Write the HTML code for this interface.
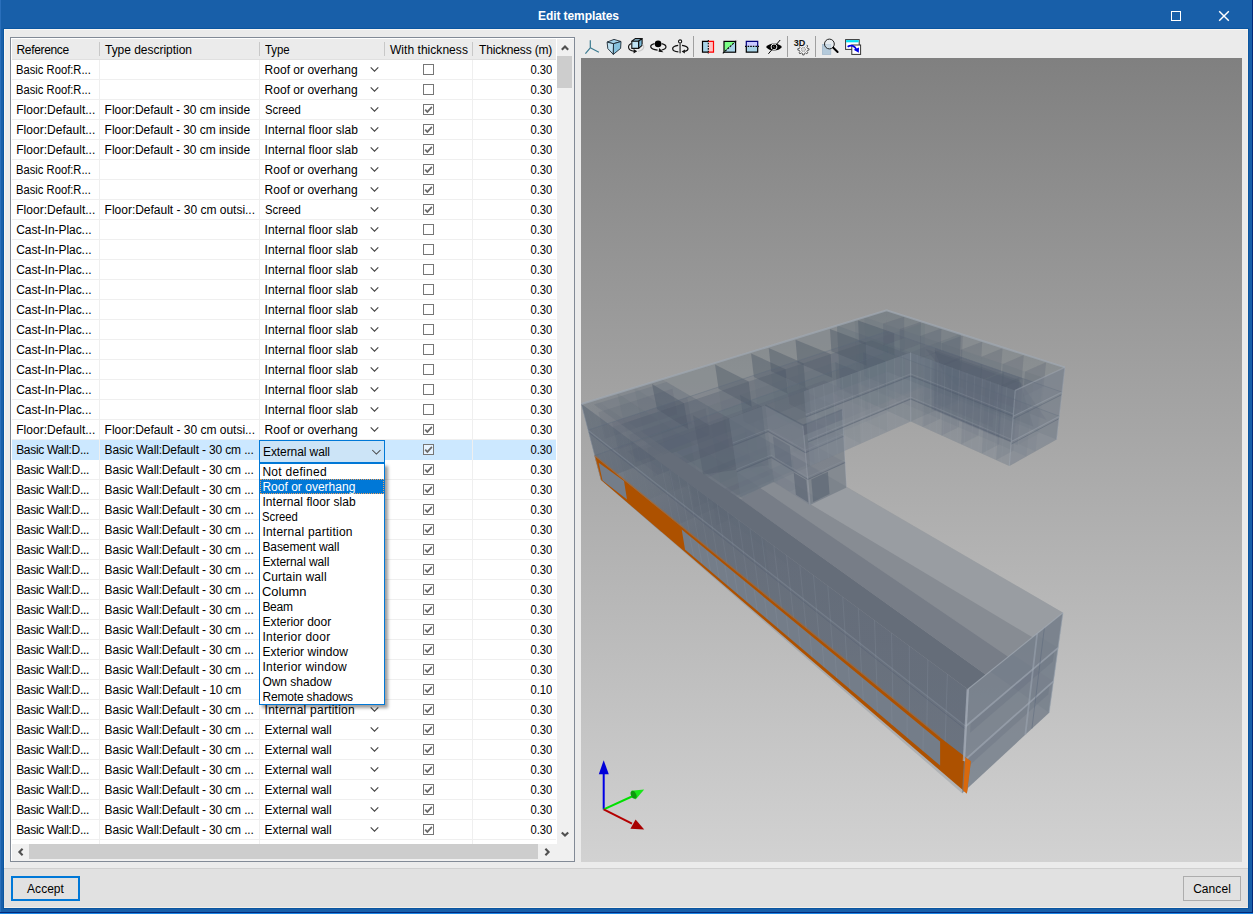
<!DOCTYPE html>
<html><head><meta charset="utf-8"><title>Edit templates</title>
<style>
*{box-sizing:border-box;margin:0;padding:0}
html,body{width:1253px;height:914px;overflow:hidden;background:#185fa9}
body{font-family:"Liberation Sans",sans-serif;font-size:12px;color:#000;position:relative}
span{white-space:pre}
.sx{display:inline-block;transform-origin:0 50%}
.c5 .sx{transform-origin:100% 50%}
#win{position:absolute;left:0;top:0;width:1253px;height:914px;background:#185fa9;overflow:hidden}
#win>div,#win>svg{position:absolute}
#bl{left:0;top:0;width:1px;height:914px;background:#2a6fbb}
#br{left:1252px;top:0;width:1px;height:914px;background:#03297a}
#bb{left:0;top:912px;width:1253px;height:1px;background:#03297a}
#bb2{left:0;top:913px;width:1253px;height:1px;background:#1b86e4}
#title{left:0;top:0;width:1253px;height:29px;color:#fff;font-weight:bold;font-size:12px}
#title .tt{position:absolute;left:538px;top:9px;line-height:15px}
#tbtn{left:1170px;top:0}
#client{left:3px;top:28px;width:1246px;height:881px;background:#ebebeb;border:1px solid #0a55a0;box-shadow:inset 1px 1px 0 #f8f5f1,inset -1px -1px 0 #f3efea}
#grid{left:10px;top:37px;width:565px;height:825px;background:#fff;border:1px solid #828a96}
#grid>div,#grid>svg{position:absolute}
#hdr{left:1px;top:1px;width:544px;height:21px;background:#ebebeb;border-bottom:1px solid #e0e0e0}
.h{position:absolute;top:1px;height:20px;line-height:20px;white-space:nowrap}
.h1{left:4.5px}.h2{left:93px}.h3{left:253px}.h4{left:378px}.h5{left:467px}
.h2:before,.h3:before,.h4:before,.h5:before{content:"";position:absolute;top:2px;height:14px;width:1px;background:#c8c8c8}
.h2:before{left:-6px}.h3:before{left:-6px}.h4:before{left:-6px}.h5:before{left:-7px}
#rows{left:1px;top:22px;width:544px;height:784px;overflow:hidden}
.row{position:absolute;left:0;width:544px;height:20px;border-bottom:1px solid #efefef}
.row.sel{background:#cce8ff;border-bottom-color:#cce8ff}
.c{position:absolute;top:1px;height:19px;line-height:19px;white-space:nowrap;overflow:hidden}
.c1{left:4.2px;width:84px}.c2{left:92.6px;width:155px}.c3{left:252.6px;width:120px}.c4{left:374px;width:87px}.c5{left:462px;width:78.4px;text-align:right}
.chev{position:absolute;left:104px;top:5px}
.cb{position:absolute;left:37px;top:3px;width:11px;height:11px;border:1px solid #767676;background:#fff}
.cb svg{position:absolute;left:-1px;top:-1px}
.sel .cb{background:#e6f3ff}
.vl{position:absolute;top:0;width:1px;height:784px;background:#efefef}
#vsb{left:546px;top:1px;width:17px;height:822px;background:#f0f0f0}
#vth{position:absolute;left:0;top:17px;width:15px;height:32px;background:#cdcdcd}
#hsb{left:1px;top:806px;width:545px;height:17px;background:#f0f0f0}
#hth{position:absolute;left:17px;top:0;width:509px;height:15px;background:#cdcdcd}
.combo{left:259px;top:440px;width:126px;height:23px;background:#cce4f7;border:1px solid #0078d7}
.combo .cbt{position:absolute;left:3px;top:4px;line-height:15px}
.cchev{position:absolute;left:111px;top:8px}
.dd{left:259px;top:463px;width:126px;height:242px;background:#fff;border:1px solid #0078d7;box-shadow:3px 3px 3px rgba(0,0,0,.38)}
.it{position:absolute;left:0;width:124px;height:15px;line-height:15px;white-space:nowrap}
.it .ddt{position:absolute;left:2.4px;top:1px;line-height:15px}
.it.hl{background:#0078d7;color:#fff;outline:1px dotted #e8a060;outline-offset:-1px}
#tb{left:581px;top:34px;width:300px;height:24px}
#view{left:581px;top:58px;width:661px;height:804px;background:linear-gradient(#808080,#d2d2d2);overflow:hidden}
#sepline{left:4px;top:868px;width:1244px;height:1px;background:#cfcfcf}
#bar{left:4px;top:869px;width:1244px;height:38px;background:#e1e1e1}
#bar2{left:4px;top:907px;width:1244px;height:1px;background:#f3efea}
#accept{left:11px;top:876px;width:69px;height:25px;border:2px solid #0078d7;background:#e1e1e1;text-align:center;line-height:23px}
#cancel{left:1183px;top:876px;width:58px;height:25px;border:1px solid #adadad;background:#e1e1e1;text-align:center;line-height:25px}

</style></head>
<body>
<div id="win">
<div id="title"><span class="tt" style="letter-spacing:-0.080px">Edit templates</span></div>
<svg id="tbtn" width="80" height="29" viewBox="0 0 80 29"><rect x="1.5" y="11.5" width="9" height="9" fill="none" stroke="#fff" stroke-width="1"/><path d="M49.2 11.2 L58.8 20.8 M58.8 11.2 L49.2 20.8" stroke="#fff" stroke-width="1.45" fill="none"/></svg>
<div id="client"></div>
<div id="grid">
<div id="hdr">
<div class="h h1"><span style="letter-spacing:-0.336px">Reference</span></div><div class="h h2"><span style="letter-spacing:-0.027px">Type description</span></div><div class="h h3"><span class="sx" style="transform:scaleX(0.9500)">Type</span></div><div class="h h4"><span style="letter-spacing:0.040px">With thickness</span></div><div class="h h5"><span style="letter-spacing:-0.170px">Thickness (m)</span></div>
</div>
<div id="rows">
<div class="row" style="top:0px"><div class="c c1"><span class="sx" style="transform:scaleX(0.9348)">Basic Roof:R...</span></div><div class="c c2"></div><div class="c c3"><span style="letter-spacing:0.017px">Roof or overhang</span><svg class="chev" width="11" height="7" viewBox="0 0 11 7"><path d="M1.7 1.3 L5.5 5.1 L9.3 1.3" fill="none" stroke="#444" stroke-width="1.1"/></svg></div><div class="c c4"><span class="cb"></span></div><div class="c c5"><span class="sx" style="transform:scaleX(0.9374)">0.30</span></div></div>
<div class="row" style="top:20px"><div class="c c1"><span class="sx" style="transform:scaleX(0.9348)">Basic Roof:R...</span></div><div class="c c2"></div><div class="c c3"><span style="letter-spacing:0.017px">Roof or overhang</span><svg class="chev" width="11" height="7" viewBox="0 0 11 7"><path d="M1.7 1.3 L5.5 5.1 L9.3 1.3" fill="none" stroke="#444" stroke-width="1.1"/></svg></div><div class="c c4"><span class="cb"></span></div><div class="c c5"><span class="sx" style="transform:scaleX(0.9374)">0.30</span></div></div>
<div class="row" style="top:40px"><div class="c c1"><span style="letter-spacing:0.029px">Floor:Default...</span></div><div class="c c2"><span style="letter-spacing:-0.046px">Floor:Default - 30 cm inside</span></div><div class="c c3"><span class="sx" style="transform:scaleX(0.9425)">Screed</span><svg class="chev" width="11" height="7" viewBox="0 0 11 7"><path d="M1.7 1.3 L5.5 5.1 L9.3 1.3" fill="none" stroke="#444" stroke-width="1.1"/></svg></div><div class="c c4"><span class="cb"><svg width="11" height="11" viewBox="0 0 11 11"><path d="M2.2 5.6 L4.4 7.9 L8.9 2.9" fill="none" stroke="#6a6a6a" stroke-width="1.7"/></svg></span></div><div class="c c5"><span class="sx" style="transform:scaleX(0.9374)">0.30</span></div></div>
<div class="row" style="top:60px"><div class="c c1"><span style="letter-spacing:0.029px">Floor:Default...</span></div><div class="c c2"><span style="letter-spacing:-0.046px">Floor:Default - 30 cm inside</span></div><div class="c c3"><span style="letter-spacing:0.074px">Internal floor slab</span><svg class="chev" width="11" height="7" viewBox="0 0 11 7"><path d="M1.7 1.3 L5.5 5.1 L9.3 1.3" fill="none" stroke="#444" stroke-width="1.1"/></svg></div><div class="c c4"><span class="cb"><svg width="11" height="11" viewBox="0 0 11 11"><path d="M2.2 5.6 L4.4 7.9 L8.9 2.9" fill="none" stroke="#6a6a6a" stroke-width="1.7"/></svg></span></div><div class="c c5"><span class="sx" style="transform:scaleX(0.9374)">0.30</span></div></div>
<div class="row" style="top:80px"><div class="c c1"><span style="letter-spacing:0.029px">Floor:Default...</span></div><div class="c c2"><span style="letter-spacing:-0.046px">Floor:Default - 30 cm inside</span></div><div class="c c3"><span style="letter-spacing:0.074px">Internal floor slab</span><svg class="chev" width="11" height="7" viewBox="0 0 11 7"><path d="M1.7 1.3 L5.5 5.1 L9.3 1.3" fill="none" stroke="#444" stroke-width="1.1"/></svg></div><div class="c c4"><span class="cb"><svg width="11" height="11" viewBox="0 0 11 11"><path d="M2.2 5.6 L4.4 7.9 L8.9 2.9" fill="none" stroke="#6a6a6a" stroke-width="1.7"/></svg></span></div><div class="c c5"><span class="sx" style="transform:scaleX(0.9374)">0.30</span></div></div>
<div class="row" style="top:100px"><div class="c c1"><span class="sx" style="transform:scaleX(0.9348)">Basic Roof:R...</span></div><div class="c c2"></div><div class="c c3"><span style="letter-spacing:0.017px">Roof or overhang</span><svg class="chev" width="11" height="7" viewBox="0 0 11 7"><path d="M1.7 1.3 L5.5 5.1 L9.3 1.3" fill="none" stroke="#444" stroke-width="1.1"/></svg></div><div class="c c4"><span class="cb"><svg width="11" height="11" viewBox="0 0 11 11"><path d="M2.2 5.6 L4.4 7.9 L8.9 2.9" fill="none" stroke="#6a6a6a" stroke-width="1.7"/></svg></span></div><div class="c c5"><span class="sx" style="transform:scaleX(0.9374)">0.30</span></div></div>
<div class="row" style="top:120px"><div class="c c1"><span class="sx" style="transform:scaleX(0.9348)">Basic Roof:R...</span></div><div class="c c2"></div><div class="c c3"><span style="letter-spacing:0.017px">Roof or overhang</span><svg class="chev" width="11" height="7" viewBox="0 0 11 7"><path d="M1.7 1.3 L5.5 5.1 L9.3 1.3" fill="none" stroke="#444" stroke-width="1.1"/></svg></div><div class="c c4"><span class="cb"><svg width="11" height="11" viewBox="0 0 11 11"><path d="M2.2 5.6 L4.4 7.9 L8.9 2.9" fill="none" stroke="#6a6a6a" stroke-width="1.7"/></svg></span></div><div class="c c5"><span class="sx" style="transform:scaleX(0.9374)">0.30</span></div></div>
<div class="row" style="top:140px"><div class="c c1"><span style="letter-spacing:0.029px">Floor:Default...</span></div><div class="c c2"><span style="letter-spacing:-0.010px">Floor:Default - 30 cm outsi...</span></div><div class="c c3"><span class="sx" style="transform:scaleX(0.9425)">Screed</span><svg class="chev" width="11" height="7" viewBox="0 0 11 7"><path d="M1.7 1.3 L5.5 5.1 L9.3 1.3" fill="none" stroke="#444" stroke-width="1.1"/></svg></div><div class="c c4"><span class="cb"><svg width="11" height="11" viewBox="0 0 11 11"><path d="M2.2 5.6 L4.4 7.9 L8.9 2.9" fill="none" stroke="#6a6a6a" stroke-width="1.7"/></svg></span></div><div class="c c5"><span class="sx" style="transform:scaleX(0.9374)">0.30</span></div></div>
<div class="row" style="top:160px"><div class="c c1"><span style="letter-spacing:-0.049px">Cast-In-Plac...</span></div><div class="c c2"></div><div class="c c3"><span style="letter-spacing:0.074px">Internal floor slab</span><svg class="chev" width="11" height="7" viewBox="0 0 11 7"><path d="M1.7 1.3 L5.5 5.1 L9.3 1.3" fill="none" stroke="#444" stroke-width="1.1"/></svg></div><div class="c c4"><span class="cb"></span></div><div class="c c5"><span class="sx" style="transform:scaleX(0.9374)">0.30</span></div></div>
<div class="row" style="top:180px"><div class="c c1"><span style="letter-spacing:-0.049px">Cast-In-Plac...</span></div><div class="c c2"></div><div class="c c3"><span style="letter-spacing:0.074px">Internal floor slab</span><svg class="chev" width="11" height="7" viewBox="0 0 11 7"><path d="M1.7 1.3 L5.5 5.1 L9.3 1.3" fill="none" stroke="#444" stroke-width="1.1"/></svg></div><div class="c c4"><span class="cb"></span></div><div class="c c5"><span class="sx" style="transform:scaleX(0.9374)">0.30</span></div></div>
<div class="row" style="top:200px"><div class="c c1"><span style="letter-spacing:-0.049px">Cast-In-Plac...</span></div><div class="c c2"></div><div class="c c3"><span style="letter-spacing:0.074px">Internal floor slab</span><svg class="chev" width="11" height="7" viewBox="0 0 11 7"><path d="M1.7 1.3 L5.5 5.1 L9.3 1.3" fill="none" stroke="#444" stroke-width="1.1"/></svg></div><div class="c c4"><span class="cb"></span></div><div class="c c5"><span class="sx" style="transform:scaleX(0.9374)">0.30</span></div></div>
<div class="row" style="top:220px"><div class="c c1"><span style="letter-spacing:-0.049px">Cast-In-Plac...</span></div><div class="c c2"></div><div class="c c3"><span style="letter-spacing:0.074px">Internal floor slab</span><svg class="chev" width="11" height="7" viewBox="0 0 11 7"><path d="M1.7 1.3 L5.5 5.1 L9.3 1.3" fill="none" stroke="#444" stroke-width="1.1"/></svg></div><div class="c c4"><span class="cb"></span></div><div class="c c5"><span class="sx" style="transform:scaleX(0.9374)">0.30</span></div></div>
<div class="row" style="top:240px"><div class="c c1"><span style="letter-spacing:-0.049px">Cast-In-Plac...</span></div><div class="c c2"></div><div class="c c3"><span style="letter-spacing:0.074px">Internal floor slab</span><svg class="chev" width="11" height="7" viewBox="0 0 11 7"><path d="M1.7 1.3 L5.5 5.1 L9.3 1.3" fill="none" stroke="#444" stroke-width="1.1"/></svg></div><div class="c c4"><span class="cb"></span></div><div class="c c5"><span class="sx" style="transform:scaleX(0.9374)">0.30</span></div></div>
<div class="row" style="top:260px"><div class="c c1"><span style="letter-spacing:-0.049px">Cast-In-Plac...</span></div><div class="c c2"></div><div class="c c3"><span style="letter-spacing:0.074px">Internal floor slab</span><svg class="chev" width="11" height="7" viewBox="0 0 11 7"><path d="M1.7 1.3 L5.5 5.1 L9.3 1.3" fill="none" stroke="#444" stroke-width="1.1"/></svg></div><div class="c c4"><span class="cb"></span></div><div class="c c5"><span class="sx" style="transform:scaleX(0.9374)">0.30</span></div></div>
<div class="row" style="top:280px"><div class="c c1"><span style="letter-spacing:-0.049px">Cast-In-Plac...</span></div><div class="c c2"></div><div class="c c3"><span style="letter-spacing:0.074px">Internal floor slab</span><svg class="chev" width="11" height="7" viewBox="0 0 11 7"><path d="M1.7 1.3 L5.5 5.1 L9.3 1.3" fill="none" stroke="#444" stroke-width="1.1"/></svg></div><div class="c c4"><span class="cb"></span></div><div class="c c5"><span class="sx" style="transform:scaleX(0.9374)">0.30</span></div></div>
<div class="row" style="top:300px"><div class="c c1"><span style="letter-spacing:-0.049px">Cast-In-Plac...</span></div><div class="c c2"></div><div class="c c3"><span style="letter-spacing:0.074px">Internal floor slab</span><svg class="chev" width="11" height="7" viewBox="0 0 11 7"><path d="M1.7 1.3 L5.5 5.1 L9.3 1.3" fill="none" stroke="#444" stroke-width="1.1"/></svg></div><div class="c c4"><span class="cb"></span></div><div class="c c5"><span class="sx" style="transform:scaleX(0.9374)">0.30</span></div></div>
<div class="row" style="top:320px"><div class="c c1"><span style="letter-spacing:-0.049px">Cast-In-Plac...</span></div><div class="c c2"></div><div class="c c3"><span style="letter-spacing:0.074px">Internal floor slab</span><svg class="chev" width="11" height="7" viewBox="0 0 11 7"><path d="M1.7 1.3 L5.5 5.1 L9.3 1.3" fill="none" stroke="#444" stroke-width="1.1"/></svg></div><div class="c c4"><span class="cb"></span></div><div class="c c5"><span class="sx" style="transform:scaleX(0.9374)">0.30</span></div></div>
<div class="row" style="top:340px"><div class="c c1"><span style="letter-spacing:-0.049px">Cast-In-Plac...</span></div><div class="c c2"></div><div class="c c3"><span style="letter-spacing:0.074px">Internal floor slab</span><svg class="chev" width="11" height="7" viewBox="0 0 11 7"><path d="M1.7 1.3 L5.5 5.1 L9.3 1.3" fill="none" stroke="#444" stroke-width="1.1"/></svg></div><div class="c c4"><span class="cb"></span></div><div class="c c5"><span class="sx" style="transform:scaleX(0.9374)">0.30</span></div></div>
<div class="row" style="top:360px"><div class="c c1"><span style="letter-spacing:0.029px">Floor:Default...</span></div><div class="c c2"><span style="letter-spacing:-0.010px">Floor:Default - 30 cm outsi...</span></div><div class="c c3"><span style="letter-spacing:0.017px">Roof or overhang</span><svg class="chev" width="11" height="7" viewBox="0 0 11 7"><path d="M1.7 1.3 L5.5 5.1 L9.3 1.3" fill="none" stroke="#444" stroke-width="1.1"/></svg></div><div class="c c4"><span class="cb"><svg width="11" height="11" viewBox="0 0 11 11"><path d="M2.2 5.6 L4.4 7.9 L8.9 2.9" fill="none" stroke="#6a6a6a" stroke-width="1.7"/></svg></span></div><div class="c c5"><span class="sx" style="transform:scaleX(0.9374)">0.30</span></div></div>
<div class="row sel" style="top:380px"><div class="c c1"><span style="letter-spacing:-0.317px">Basic Wall:D...</span></div><div class="c c2"><span style="letter-spacing:-0.150px">Basic Wall:Default - 30 cm ...</span></div><div class="c c3"><span style="letter-spacing:-0.088px">External wall</span><svg class="chev" width="11" height="7" viewBox="0 0 11 7"><path d="M1.7 1.3 L5.5 5.1 L9.3 1.3" fill="none" stroke="#444" stroke-width="1.1"/></svg></div><div class="c c4"><span class="cb"><svg width="11" height="11" viewBox="0 0 11 11"><path d="M2.2 5.6 L4.4 7.9 L8.9 2.9" fill="none" stroke="#6a6a6a" stroke-width="1.7"/></svg></span></div><div class="c c5"><span class="sx" style="transform:scaleX(0.9374)">0.30</span></div></div>
<div class="row" style="top:400px"><div class="c c1"><span style="letter-spacing:-0.317px">Basic Wall:D...</span></div><div class="c c2"><span style="letter-spacing:-0.150px">Basic Wall:Default - 30 cm ...</span></div><div class="c c3"><span style="letter-spacing:-0.088px">External wall</span><svg class="chev" width="11" height="7" viewBox="0 0 11 7"><path d="M1.7 1.3 L5.5 5.1 L9.3 1.3" fill="none" stroke="#444" stroke-width="1.1"/></svg></div><div class="c c4"><span class="cb"><svg width="11" height="11" viewBox="0 0 11 11"><path d="M2.2 5.6 L4.4 7.9 L8.9 2.9" fill="none" stroke="#6a6a6a" stroke-width="1.7"/></svg></span></div><div class="c c5"><span class="sx" style="transform:scaleX(0.9374)">0.30</span></div></div>
<div class="row" style="top:420px"><div class="c c1"><span style="letter-spacing:-0.317px">Basic Wall:D...</span></div><div class="c c2"><span style="letter-spacing:-0.150px">Basic Wall:Default - 30 cm ...</span></div><div class="c c3"><span style="letter-spacing:-0.088px">External wall</span><svg class="chev" width="11" height="7" viewBox="0 0 11 7"><path d="M1.7 1.3 L5.5 5.1 L9.3 1.3" fill="none" stroke="#444" stroke-width="1.1"/></svg></div><div class="c c4"><span class="cb"><svg width="11" height="11" viewBox="0 0 11 11"><path d="M2.2 5.6 L4.4 7.9 L8.9 2.9" fill="none" stroke="#6a6a6a" stroke-width="1.7"/></svg></span></div><div class="c c5"><span class="sx" style="transform:scaleX(0.9374)">0.30</span></div></div>
<div class="row" style="top:440px"><div class="c c1"><span style="letter-spacing:-0.317px">Basic Wall:D...</span></div><div class="c c2"><span style="letter-spacing:-0.150px">Basic Wall:Default - 30 cm ...</span></div><div class="c c3"><span style="letter-spacing:-0.088px">External wall</span><svg class="chev" width="11" height="7" viewBox="0 0 11 7"><path d="M1.7 1.3 L5.5 5.1 L9.3 1.3" fill="none" stroke="#444" stroke-width="1.1"/></svg></div><div class="c c4"><span class="cb"><svg width="11" height="11" viewBox="0 0 11 11"><path d="M2.2 5.6 L4.4 7.9 L8.9 2.9" fill="none" stroke="#6a6a6a" stroke-width="1.7"/></svg></span></div><div class="c c5"><span class="sx" style="transform:scaleX(0.9374)">0.30</span></div></div>
<div class="row" style="top:460px"><div class="c c1"><span style="letter-spacing:-0.317px">Basic Wall:D...</span></div><div class="c c2"><span style="letter-spacing:-0.150px">Basic Wall:Default - 30 cm ...</span></div><div class="c c3"><span style="letter-spacing:-0.088px">External wall</span><svg class="chev" width="11" height="7" viewBox="0 0 11 7"><path d="M1.7 1.3 L5.5 5.1 L9.3 1.3" fill="none" stroke="#444" stroke-width="1.1"/></svg></div><div class="c c4"><span class="cb"><svg width="11" height="11" viewBox="0 0 11 11"><path d="M2.2 5.6 L4.4 7.9 L8.9 2.9" fill="none" stroke="#6a6a6a" stroke-width="1.7"/></svg></span></div><div class="c c5"><span class="sx" style="transform:scaleX(0.9374)">0.30</span></div></div>
<div class="row" style="top:480px"><div class="c c1"><span style="letter-spacing:-0.317px">Basic Wall:D...</span></div><div class="c c2"><span style="letter-spacing:-0.150px">Basic Wall:Default - 30 cm ...</span></div><div class="c c3"><span style="letter-spacing:-0.088px">External wall</span><svg class="chev" width="11" height="7" viewBox="0 0 11 7"><path d="M1.7 1.3 L5.5 5.1 L9.3 1.3" fill="none" stroke="#444" stroke-width="1.1"/></svg></div><div class="c c4"><span class="cb"><svg width="11" height="11" viewBox="0 0 11 11"><path d="M2.2 5.6 L4.4 7.9 L8.9 2.9" fill="none" stroke="#6a6a6a" stroke-width="1.7"/></svg></span></div><div class="c c5"><span class="sx" style="transform:scaleX(0.9374)">0.30</span></div></div>
<div class="row" style="top:500px"><div class="c c1"><span style="letter-spacing:-0.317px">Basic Wall:D...</span></div><div class="c c2"><span style="letter-spacing:-0.150px">Basic Wall:Default - 30 cm ...</span></div><div class="c c3"><span style="letter-spacing:-0.088px">External wall</span><svg class="chev" width="11" height="7" viewBox="0 0 11 7"><path d="M1.7 1.3 L5.5 5.1 L9.3 1.3" fill="none" stroke="#444" stroke-width="1.1"/></svg></div><div class="c c4"><span class="cb"><svg width="11" height="11" viewBox="0 0 11 11"><path d="M2.2 5.6 L4.4 7.9 L8.9 2.9" fill="none" stroke="#6a6a6a" stroke-width="1.7"/></svg></span></div><div class="c c5"><span class="sx" style="transform:scaleX(0.9374)">0.30</span></div></div>
<div class="row" style="top:520px"><div class="c c1"><span style="letter-spacing:-0.317px">Basic Wall:D...</span></div><div class="c c2"><span style="letter-spacing:-0.150px">Basic Wall:Default - 30 cm ...</span></div><div class="c c3"><span style="letter-spacing:-0.088px">External wall</span><svg class="chev" width="11" height="7" viewBox="0 0 11 7"><path d="M1.7 1.3 L5.5 5.1 L9.3 1.3" fill="none" stroke="#444" stroke-width="1.1"/></svg></div><div class="c c4"><span class="cb"><svg width="11" height="11" viewBox="0 0 11 11"><path d="M2.2 5.6 L4.4 7.9 L8.9 2.9" fill="none" stroke="#6a6a6a" stroke-width="1.7"/></svg></span></div><div class="c c5"><span class="sx" style="transform:scaleX(0.9374)">0.30</span></div></div>
<div class="row" style="top:540px"><div class="c c1"><span style="letter-spacing:-0.317px">Basic Wall:D...</span></div><div class="c c2"><span style="letter-spacing:-0.150px">Basic Wall:Default - 30 cm ...</span></div><div class="c c3"><span style="letter-spacing:-0.088px">External wall</span><svg class="chev" width="11" height="7" viewBox="0 0 11 7"><path d="M1.7 1.3 L5.5 5.1 L9.3 1.3" fill="none" stroke="#444" stroke-width="1.1"/></svg></div><div class="c c4"><span class="cb"><svg width="11" height="11" viewBox="0 0 11 11"><path d="M2.2 5.6 L4.4 7.9 L8.9 2.9" fill="none" stroke="#6a6a6a" stroke-width="1.7"/></svg></span></div><div class="c c5"><span class="sx" style="transform:scaleX(0.9374)">0.30</span></div></div>
<div class="row" style="top:560px"><div class="c c1"><span style="letter-spacing:-0.317px">Basic Wall:D...</span></div><div class="c c2"><span style="letter-spacing:-0.150px">Basic Wall:Default - 30 cm ...</span></div><div class="c c3"><span style="letter-spacing:-0.088px">External wall</span><svg class="chev" width="11" height="7" viewBox="0 0 11 7"><path d="M1.7 1.3 L5.5 5.1 L9.3 1.3" fill="none" stroke="#444" stroke-width="1.1"/></svg></div><div class="c c4"><span class="cb"><svg width="11" height="11" viewBox="0 0 11 11"><path d="M2.2 5.6 L4.4 7.9 L8.9 2.9" fill="none" stroke="#6a6a6a" stroke-width="1.7"/></svg></span></div><div class="c c5"><span class="sx" style="transform:scaleX(0.9374)">0.30</span></div></div>
<div class="row" style="top:580px"><div class="c c1"><span style="letter-spacing:-0.317px">Basic Wall:D...</span></div><div class="c c2"><span style="letter-spacing:-0.150px">Basic Wall:Default - 30 cm ...</span></div><div class="c c3"><span style="letter-spacing:-0.088px">External wall</span><svg class="chev" width="11" height="7" viewBox="0 0 11 7"><path d="M1.7 1.3 L5.5 5.1 L9.3 1.3" fill="none" stroke="#444" stroke-width="1.1"/></svg></div><div class="c c4"><span class="cb"><svg width="11" height="11" viewBox="0 0 11 11"><path d="M2.2 5.6 L4.4 7.9 L8.9 2.9" fill="none" stroke="#6a6a6a" stroke-width="1.7"/></svg></span></div><div class="c c5"><span class="sx" style="transform:scaleX(0.9374)">0.30</span></div></div>
<div class="row" style="top:600px"><div class="c c1"><span style="letter-spacing:-0.317px">Basic Wall:D...</span></div><div class="c c2"><span style="letter-spacing:-0.150px">Basic Wall:Default - 30 cm ...</span></div><div class="c c3"><span style="letter-spacing:-0.088px">External wall</span><svg class="chev" width="11" height="7" viewBox="0 0 11 7"><path d="M1.7 1.3 L5.5 5.1 L9.3 1.3" fill="none" stroke="#444" stroke-width="1.1"/></svg></div><div class="c c4"><span class="cb"><svg width="11" height="11" viewBox="0 0 11 11"><path d="M2.2 5.6 L4.4 7.9 L8.9 2.9" fill="none" stroke="#6a6a6a" stroke-width="1.7"/></svg></span></div><div class="c c5"><span class="sx" style="transform:scaleX(0.9374)">0.30</span></div></div>
<div class="row" style="top:620px"><div class="c c1"><span style="letter-spacing:-0.317px">Basic Wall:D...</span></div><div class="c c2"><span style="letter-spacing:-0.143px">Basic Wall:Default - 10 cm</span></div><div class="c c3"><span style="letter-spacing:0.237px">Internal partition</span><svg class="chev" width="11" height="7" viewBox="0 0 11 7"><path d="M1.7 1.3 L5.5 5.1 L9.3 1.3" fill="none" stroke="#444" stroke-width="1.1"/></svg></div><div class="c c4"><span class="cb"><svg width="11" height="11" viewBox="0 0 11 11"><path d="M2.2 5.6 L4.4 7.9 L8.9 2.9" fill="none" stroke="#6a6a6a" stroke-width="1.7"/></svg></span></div><div class="c c5"><span class="sx" style="transform:scaleX(0.9374)">0.10</span></div></div>
<div class="row" style="top:640px"><div class="c c1"><span style="letter-spacing:-0.317px">Basic Wall:D...</span></div><div class="c c2"><span style="letter-spacing:-0.150px">Basic Wall:Default - 30 cm ...</span></div><div class="c c3"><span style="letter-spacing:0.237px">Internal partition</span><svg class="chev" width="11" height="7" viewBox="0 0 11 7"><path d="M1.7 1.3 L5.5 5.1 L9.3 1.3" fill="none" stroke="#444" stroke-width="1.1"/></svg></div><div class="c c4"><span class="cb"><svg width="11" height="11" viewBox="0 0 11 11"><path d="M2.2 5.6 L4.4 7.9 L8.9 2.9" fill="none" stroke="#6a6a6a" stroke-width="1.7"/></svg></span></div><div class="c c5"><span class="sx" style="transform:scaleX(0.9374)">0.30</span></div></div>
<div class="row" style="top:660px"><div class="c c1"><span style="letter-spacing:-0.317px">Basic Wall:D...</span></div><div class="c c2"><span style="letter-spacing:-0.150px">Basic Wall:Default - 30 cm ...</span></div><div class="c c3"><span style="letter-spacing:-0.088px">External wall</span><svg class="chev" width="11" height="7" viewBox="0 0 11 7"><path d="M1.7 1.3 L5.5 5.1 L9.3 1.3" fill="none" stroke="#444" stroke-width="1.1"/></svg></div><div class="c c4"><span class="cb"><svg width="11" height="11" viewBox="0 0 11 11"><path d="M2.2 5.6 L4.4 7.9 L8.9 2.9" fill="none" stroke="#6a6a6a" stroke-width="1.7"/></svg></span></div><div class="c c5"><span class="sx" style="transform:scaleX(0.9374)">0.30</span></div></div>
<div class="row" style="top:680px"><div class="c c1"><span style="letter-spacing:-0.317px">Basic Wall:D...</span></div><div class="c c2"><span style="letter-spacing:-0.150px">Basic Wall:Default - 30 cm ...</span></div><div class="c c3"><span style="letter-spacing:-0.088px">External wall</span><svg class="chev" width="11" height="7" viewBox="0 0 11 7"><path d="M1.7 1.3 L5.5 5.1 L9.3 1.3" fill="none" stroke="#444" stroke-width="1.1"/></svg></div><div class="c c4"><span class="cb"><svg width="11" height="11" viewBox="0 0 11 11"><path d="M2.2 5.6 L4.4 7.9 L8.9 2.9" fill="none" stroke="#6a6a6a" stroke-width="1.7"/></svg></span></div><div class="c c5"><span class="sx" style="transform:scaleX(0.9374)">0.30</span></div></div>
<div class="row" style="top:700px"><div class="c c1"><span style="letter-spacing:-0.317px">Basic Wall:D...</span></div><div class="c c2"><span style="letter-spacing:-0.150px">Basic Wall:Default - 30 cm ...</span></div><div class="c c3"><span style="letter-spacing:-0.088px">External wall</span><svg class="chev" width="11" height="7" viewBox="0 0 11 7"><path d="M1.7 1.3 L5.5 5.1 L9.3 1.3" fill="none" stroke="#444" stroke-width="1.1"/></svg></div><div class="c c4"><span class="cb"><svg width="11" height="11" viewBox="0 0 11 11"><path d="M2.2 5.6 L4.4 7.9 L8.9 2.9" fill="none" stroke="#6a6a6a" stroke-width="1.7"/></svg></span></div><div class="c c5"><span class="sx" style="transform:scaleX(0.9374)">0.30</span></div></div>
<div class="row" style="top:720px"><div class="c c1"><span style="letter-spacing:-0.317px">Basic Wall:D...</span></div><div class="c c2"><span style="letter-spacing:-0.150px">Basic Wall:Default - 30 cm ...</span></div><div class="c c3"><span style="letter-spacing:-0.088px">External wall</span><svg class="chev" width="11" height="7" viewBox="0 0 11 7"><path d="M1.7 1.3 L5.5 5.1 L9.3 1.3" fill="none" stroke="#444" stroke-width="1.1"/></svg></div><div class="c c4"><span class="cb"><svg width="11" height="11" viewBox="0 0 11 11"><path d="M2.2 5.6 L4.4 7.9 L8.9 2.9" fill="none" stroke="#6a6a6a" stroke-width="1.7"/></svg></span></div><div class="c c5"><span class="sx" style="transform:scaleX(0.9374)">0.30</span></div></div>
<div class="row" style="top:740px"><div class="c c1"><span style="letter-spacing:-0.317px">Basic Wall:D...</span></div><div class="c c2"><span style="letter-spacing:-0.150px">Basic Wall:Default - 30 cm ...</span></div><div class="c c3"><span style="letter-spacing:-0.088px">External wall</span><svg class="chev" width="11" height="7" viewBox="0 0 11 7"><path d="M1.7 1.3 L5.5 5.1 L9.3 1.3" fill="none" stroke="#444" stroke-width="1.1"/></svg></div><div class="c c4"><span class="cb"><svg width="11" height="11" viewBox="0 0 11 11"><path d="M2.2 5.6 L4.4 7.9 L8.9 2.9" fill="none" stroke="#6a6a6a" stroke-width="1.7"/></svg></span></div><div class="c c5"><span class="sx" style="transform:scaleX(0.9374)">0.30</span></div></div>
<div class="row" style="top:760px"><div class="c c1"><span style="letter-spacing:-0.317px">Basic Wall:D...</span></div><div class="c c2"><span style="letter-spacing:-0.150px">Basic Wall:Default - 30 cm ...</span></div><div class="c c3"><span style="letter-spacing:-0.088px">External wall</span><svg class="chev" width="11" height="7" viewBox="0 0 11 7"><path d="M1.7 1.3 L5.5 5.1 L9.3 1.3" fill="none" stroke="#444" stroke-width="1.1"/></svg></div><div class="c c4"><span class="cb"><svg width="11" height="11" viewBox="0 0 11 11"><path d="M2.2 5.6 L4.4 7.9 L8.9 2.9" fill="none" stroke="#6a6a6a" stroke-width="1.7"/></svg></span></div><div class="c c5"><span class="sx" style="transform:scaleX(0.9374)">0.30</span></div></div>
<div class="row" style="top:780px"><div class="c c1"><span style="letter-spacing:-0.317px">Basic Wall:D...</span></div><div class="c c2"><span style="letter-spacing:-0.150px">Basic Wall:Default - 30 cm ...</span></div><div class="c c3"><span style="letter-spacing:-0.088px">External wall</span><svg class="chev" width="11" height="7" viewBox="0 0 11 7"><path d="M1.7 1.3 L5.5 5.1 L9.3 1.3" fill="none" stroke="#444" stroke-width="1.1"/></svg></div><div class="c c4"><span class="cb"><svg width="11" height="11" viewBox="0 0 11 11"><path d="M2.2 5.6 L4.4 7.9 L8.9 2.9" fill="none" stroke="#6a6a6a" stroke-width="1.7"/></svg></span></div><div class="c c5"><span class="sx" style="transform:scaleX(0.9374)">0.30</span></div></div>
<div class="vl" style="left:87px"></div><div class="vl" style="left:247px"></div><div class="vl" style="left:460px"></div>
</div>
<div id="vsb"><svg width="16" height="16" style="position:absolute;left:0;top:1px" viewBox="0 0 16 16"><path d="M4.8 9.8 L8 6.6 L11.2 9.8" fill="none" stroke="#505050" stroke-width="2.1"/></svg><div id="vth"></div><svg width="16" height="16" style="position:absolute;left:0;top:787px" viewBox="0 0 16 16"><path d="M4.8 6.4 L8 9.6 L11.2 6.4" fill="none" stroke="#505050" stroke-width="2.1"/></svg></div>
<div id="hsb"><svg width="16" height="16" style="position:absolute;left:1px;top:0" viewBox="0 0 16 16"><path d="M9.6 4.7 L6.4 8 L9.6 11.3" fill="none" stroke="#505050" stroke-width="2.1"/></svg><div id="hth"></div><svg width="16" height="16" style="position:absolute;left:527px;top:0" viewBox="0 0 16 16"><path d="M6.4 4.7 L9.6 8 L6.4 11.3" fill="none" stroke="#505050" stroke-width="2.1"/></svg></div>
</div>
<div class="combo"><span class="cbt" style="letter-spacing:-0.088px">External wall</span><svg class="cchev" width="11" height="7" viewBox="0 0 11 7"><path d="M1.3 1 L5.4 5.1 L9.5 1" fill="none" stroke="#444" stroke-width="1.05"/></svg></div>
<div class="dd">
<div class="it" style="top:0px"><span class="ddt" style="letter-spacing:0.280px">Not defined</span></div>
<div class="it hl" style="top:15px"><span class="ddt" style="letter-spacing:0.017px">Roof or overhang</span></div>
<div class="it" style="top:30px"><span class="ddt" style="letter-spacing:0.074px">Internal floor slab</span></div>
<div class="it" style="top:45px"><span class="ddt sx" style="transform:scaleX(0.9425)">Screed</span></div>
<div class="it" style="top:60px"><span class="ddt" style="letter-spacing:0.237px">Internal partition</span></div>
<div class="it" style="top:75px"><span class="ddt" style="letter-spacing:-0.089px">Basement wall</span></div>
<div class="it" style="top:90px"><span class="ddt" style="letter-spacing:-0.088px">External wall</span></div>
<div class="it" style="top:105px"><span class="ddt" style="letter-spacing:0.134px">Curtain wall</span></div>
<div class="it" style="top:120px"><span class="ddt sx" style="transform:scaleX(1.0768)">Column</span></div>
<div class="it" style="top:135px"><span class="ddt" style="letter-spacing:-0.284px">Beam</span></div>
<div class="it" style="top:150px"><span class="ddt" style="letter-spacing:0.008px">Exterior door</span></div>
<div class="it" style="top:165px"><span class="ddt" style="letter-spacing:0.258px">Interior door</span></div>
<div class="it" style="top:180px"><span class="ddt" style="letter-spacing:0.055px">Exterior window</span></div>
<div class="it" style="top:195px"><span class="ddt" style="letter-spacing:0.262px">Interior window</span></div>
<div class="it" style="top:210px"><span class="ddt" style="letter-spacing:-0.011px">Own shadow</span></div>
<div class="it" style="top:225px"><span class="ddt" style="letter-spacing:-0.170px">Remote shadows</span></div>
</div>
<div id="tb"><svg width="300" height="24" viewBox="0 0 300 24">
<!-- 1 axes -->
<path d="M9.3 6.2 V13.8 L4.4 19.6 M9.3 13.8 L17.9 18.2" fill="none" stroke="#3b7a90" stroke-width="1.2"/>
<!-- 2 cube -->
<g stroke="#1b2833" stroke-width="0.9" stroke-linejoin="round">
<path d="M26.1 8.1 L33 5.4 L40 7.5 L32.5 9.7 Z" fill="#a5d3ea"/>
<path d="M26.1 8.1 L32.5 9.7 L32.3 20.4 L26.8 14.6 Z" fill="#bfe2f2"/>
<path d="M32.5 9.7 L40 7.5 L39.6 14.4 L32.3 20.4 Z" fill="#86c2de"/>
</g>
<!-- 3 cube with rotation -->
<g stroke="#111" stroke-width="1.1" stroke-linejoin="round">
<path d="M50.8 7.2 L54.2 4.6 L61.1 4.6 L57.6 7.2 Z" fill="#9ccfe8"/>
<path d="M57.6 7.2 L61.1 4.6 L61.1 11.4 L57.6 14.4 Z" fill="#7ab8d6"/>
<rect x="50.8" y="7.2" width="6.8" height="7.2" fill="#bfe2f2"/>
</g>
<path d="M50.3 9.6 C46.2 11.5 46.4 16.6 53 17.2" fill="none" stroke="#111" stroke-width="1.1"/>
<path d="M52.6 15 L56.2 17.3 L52.6 19.4 Z" fill="#111"/>
<path d="M57 17.2 C62.5 16.8 64 12.8 61.6 10.4" fill="none" stroke="#c9c9c9" stroke-width="1.1"/>
<!-- 4 sphere orbit -->
<circle cx="77.1" cy="9.9" r="3.3" fill="#000"/>
<path d="M73.6 9.6 C67.8 11 68.2 15 76.6 16.2 M80.6 9.6 C86.8 11 86 15 80.6 16" fill="none" stroke="#111" stroke-width="1.25"/>
<path d="M78.2 14 L82.4 18.2 L77.6 17.8 Z" fill="#111"/>
<!-- 5 pivot orbit -->
<circle cx="99.1" cy="7.5" r="1.6" fill="#fff" stroke="#111" stroke-width="1.1"/>
<path d="M99.1 9.2 V19.2" stroke="#555" stroke-width="1.6"/>
<path d="M97.2 11.4 C89.8 12.4 89.8 17.2 97.4 17.8 M101 11.4 C108.6 12.4 108.4 16.6 103.6 17.4" fill="none" stroke="#111" stroke-width="1.25"/>
<path d="M100.6 17.6 L104 15.4 L103.8 19.4 Z" fill="#111"/>
<!-- sep -->
<rect x="112" y="2" width="1" height="21" fill="#a0a0a0"/>
<!-- 6 split rect -->
<rect x="121.5" y="7.4" width="5.8" height="10.8" fill="#a9d4e8"/><rect x="127.3" y="7.4" width="5.2" height="10.8" fill="#ffc3c3"/>
<path d="M127.3 7.4 H121.5 V18.2 H127.3" fill="none" stroke="#000" stroke-width="1.2"/>
<path d="M127.3 7.4 H132.5 V18.2 H127.3" fill="none" stroke="#f00" stroke-width="1.2"/>
<path d="M127.3 6 V20" stroke="#000" stroke-width="1.1" stroke-dasharray="1.6 1.1"/>
<!-- 7 diagonal -->
<path d="M143 7.4 H154.6 L143 18.2 Z" fill="#7cff86"/><path d="M154.6 7.4 V18.2 H143 Z" fill="#a9d4e8"/>
<rect x="143" y="7.4" width="11.6" height="10.8" fill="none" stroke="#000" stroke-width="1.2"/>
<path d="M141.8 19.4 L155.8 6.2" stroke="#000" stroke-width="1.1" stroke-dasharray="2.2 1"/>
<!-- 8 horizontal split -->
<rect x="165.3" y="7.4" width="11.4" height="5" fill="#c9c9ff"/><rect x="165.3" y="12.4" width="11.4" height="5.8" fill="#a9d4e8"/>
<path d="M165.3 12.4 V7.4 H176.7 V12.4" fill="none" stroke="#00007a" stroke-width="1.2"/>
<path d="M165.3 12.4 V18.2 H176.7 V12.4" fill="none" stroke="#000" stroke-width="1.2"/>
<path d="M164 12.4 H178" stroke="#000" stroke-width="1.1" stroke-dasharray="1.6 1"/>
<!-- 9 eye -->
<path d="M185 12.9 C188.5 8.2 197.5 8.2 201 12.9 C197.5 17.6 188.5 17.6 185 12.9 Z" fill="#000"/>
<circle cx="193" cy="12.9" r="2.9" fill="none" stroke="#fff" stroke-width="0.9"/>
<circle cx="193" cy="12.9" r="1.1" fill="#555"/>
<path d="M187.4 19.8 L199.2 6" stroke="#000" stroke-width="1"/>
<!-- sep -->
<rect x="206" y="2" width="1" height="21" fill="#a0a0a0"/>
<!-- 10 3D gear -->
<path d="M226.39 14.44 L227.96 14.70 L227.96 16.10 L226.39 16.36 L225.90 17.54 L226.82 18.83 L225.83 19.82 L224.54 18.90 L223.36 19.39 L223.10 20.96 L221.70 20.96 L221.44 19.39 L220.26 18.90 L218.97 19.82 L217.98 18.83 L218.90 17.54 L218.41 16.36 L216.84 16.10 L216.84 14.70 L218.41 14.44 L218.90 13.26 L217.98 11.97 L218.97 10.98 L220.26 11.90 L221.44 11.41 L221.70 9.84 L223.10 9.84 L223.36 11.41 L224.54 11.90 L225.83 10.98 L226.82 11.97 L225.90 13.26 Z" fill="#f4f4f4" stroke="#4a4a4a" stroke-width="0.9" stroke-linejoin="round"/><circle cx="222.4" cy="15.4" r="2.1" fill="#d8d8d8" stroke="#6a6a6a" stroke-width="0.8" stroke-dasharray="0.9 0.7"/>
<rect x="212" y="5" width="13.5" height="7.4" fill="#ebebeb"/>
<text x="212.8" y="11.7" font-family="Liberation Sans" font-weight="bold" font-size="8.6" fill="#111" textLength="11.6" lengthAdjust="spacingAndGlyphs">3D</text>
<!-- sep -->
<rect x="234" y="2" width="1" height="21" fill="#a0a0a0"/>
<!-- 11 magnifier -->
<rect x="241.4" y="10.4" width="8.4" height="10" fill="#b4cadb" stroke="#9fb6c9" stroke-width="0.7"/>
<circle cx="248.4" cy="10" r="4.9" fill="#e4ebf1" fill-opacity="0.5" stroke="#222" stroke-width="1"/>
<path d="M252.3 13.8 L256.6 18" stroke="#000" stroke-width="2" stroke-linecap="round"/>
<!-- 12 window arrow -->
<rect x="264.6" y="5.6" width="13.6" height="9.8" fill="#fff" stroke="#333" stroke-width="1"/>
<rect x="265.1" y="6.1" width="12.6" height="2.2" fill="#00e1f5"/>
<rect x="270.8" y="11" width="8.8" height="9.4" fill="#fff" stroke="#333" stroke-width="1"/>
<path d="M266.6 12.8 C270 10.4 274 11.6 275.6 16" fill="none" stroke="#0000e6" stroke-width="1.7"/>
<path d="M272.6 15.8 L277.8 18.8 L278 13.6 Z" fill="#0000e6"/>
</svg>
</div>
<div id="view"><svg width="661" height="804" viewBox="581 58 661 804" style="display:block">
<defs><linearGradient id="gD" gradientUnits="userSpaceOnUse" x1="586" y1="407" x2="690" y2="484"><stop offset="0" stop-color="#656d79" stop-opacity="0"/><stop offset="1" stop-color="#656d79" stop-opacity="1"/></linearGradient><linearGradient id="gF" gradientUnits="userSpaceOnUse" x1="588" y1="431" x2="706" y2="523"><stop offset="0" stop-color="#56606f" stop-opacity="0.22"/><stop offset="0.55" stop-color="#56606f" stop-opacity="0.45"/><stop offset="1" stop-color="#56606f" stop-opacity="0.72"/></linearGradient></defs>
<polygon points="581.4,404.0 886.6,310.4 887.8,372.0 601.0,480.0" fill="#5c6776" fill-opacity="0.230"/>
<polygon points="643.2,449.6 960.8,334.1 958.5,400.3 661.1,532.2" fill="#5c6776" fill-opacity="0.230"/>
<polygon points="581.4,404.0 643.2,449.6 661.1,532.2 601.0,480.0" fill="#5c6776" fill-opacity="0.230"/>
<polygon points="886.6,310.4 960.8,334.1 958.5,400.3 887.8,372.0" fill="#5c6776" fill-opacity="0.230"/>
<polygon points="836.9,325.6 886.6,310.4 887.8,372.0 840.5,389.8" fill="#5c6776" fill-opacity="0.230"/>
<polygon points="1015.2,390.4 1064.9,367.4 1056.6,439.5 1009.3,466.0" fill="#5c6776" fill-opacity="0.230"/>
<polygon points="836.9,325.6 1015.2,390.4 1009.3,466.0 840.5,389.8" fill="#5c6776" fill-opacity="0.230"/>
<polygon points="886.6,310.4 1064.9,367.4 1056.6,439.5 887.8,372.0" fill="#5c6776" fill-opacity="0.230"/>
<polygon points="581.4,404.0 661.9,379.3 675.8,451.8 601.0,480.0" fill="#5c6776" fill-opacity="0.230"/>
<polygon points="967.8,689.3 1063.0,612.7 1049.1,712.7 962.1,793.3" fill="#5c6776" fill-opacity="0.230"/>
<polygon points="581.4,404.0 967.8,689.3 962.1,793.3 601.0,480.0" fill="#5c6776" fill-opacity="0.230"/>
<polygon points="661.9,379.3 1063.0,612.7 1049.1,712.7 675.8,451.8" fill="#5c6776" fill-opacity="0.230"/>
<polygon points="594.7,455.6 655.4,505.8 959.2,378.8 887.4,352.0" fill="#5c6776" fill-opacity="0.170"/>
<polygon points="910.7,399.1 1011.2,441.6 1059.3,416.2 959.2,378.8" fill="#5c6776" fill-opacity="0.170"/>
<polygon points="655.4,505.8 963.9,761.0 1053.4,681.3 736.8,471.8" fill="#5c6776" fill-opacity="0.170"/>
<polygon points="588.1,430.1 649.4,478.1 960.0,356.7 887.0,331.4" fill="#5c6776" fill-opacity="0.170"/>
<polygon points="910.6,376.0 1013.2,416.3 1062.1,392.1 960.0,356.7" fill="#5c6776" fill-opacity="0.170"/>
<polygon points="649.4,478.1 965.8,726.2 1058.1,647.9 732.9,445.5" fill="#5c6776" fill-opacity="0.170"/>
<polygon points="661.9,379.3 729.0,418.4 960.8,334.1 886.6,310.4" fill="#5c6776" fill-opacity="0.100"/>
<polygon points="910.6,352.4 1015.2,390.4 1064.9,367.4 960.8,334.1" fill="#5c6776" fill-opacity="0.100"/>
<polygon points="612.7,427.1 924.9,322.6 924.3,386.6 631.6,506.5" fill="#5c6776" fill-opacity="0.120"/>
<polygon points="708.0,406.2 887.8,344.1 889.1,411.7 720.2,482.9" fill="#5c6776" fill-opacity="0.100"/>
<polygon points="652.0,384.0 684.0,403.3 688.6,429.5 657.0,409.1" fill="#4c5767" fill-opacity="0.420"/>
<polygon points="657.0,409.1 688.6,429.5 697.5,479.5 666.6,457.2" fill="#5c6776" fill-opacity="0.100"/>
<polygon points="715.0,364.6 748.7,381.6 751.8,406.7 718.6,388.7" fill="#4c5767" fill-opacity="0.420"/>
<polygon points="718.6,388.7 751.8,406.7 757.9,454.8 725.5,435.0" fill="#5c6776" fill-opacity="0.100"/>
<polygon points="751.1,353.5 785.6,369.2 787.9,393.7 753.9,376.9" fill="#4c5767" fill-opacity="0.420"/>
<polygon points="753.9,376.9 787.9,393.7 792.5,440.6 759.4,422.1" fill="#5c6776" fill-opacity="0.100"/>
<polygon points="768.7,348.0 803.5,363.2 805.5,387.4 771.2,371.2" fill="#4c5767" fill-opacity="0.420"/>
<polygon points="771.2,371.2 805.5,387.4 809.3,433.7 776.0,415.9" fill="#5c6776" fill-opacity="0.100"/>
<polygon points="795.5,339.8 830.7,354.1 832.2,377.7 797.5,362.5" fill="#4c5767" fill-opacity="0.420"/>
<polygon points="797.5,362.5 832.2,377.7 835.0,423.2 801.3,406.3" fill="#5c6776" fill-opacity="0.100"/>
<polygon points="830.0,329.1 865.7,342.4 866.5,365.4 831.4,351.2" fill="#4c5767" fill-opacity="0.420"/>
<polygon points="831.4,351.2 866.5,365.4 868.1,409.6 834.0,393.9" fill="#5c6776" fill-opacity="0.100"/>
<polygon points="858.1,320.5 894.1,332.9 894.4,355.3 859.0,342.1" fill="#4c5767" fill-opacity="0.420"/>
<polygon points="859.0,342.1 894.4,355.3 895.0,398.6 860.7,383.8" fill="#5c6776" fill-opacity="0.100"/>
<polygon points="740.2,395.0 761.7,406.5 764.8,433.0 743.7,420.9" fill="#4c5767" fill-opacity="0.250"/>
<polygon points="743.7,420.9 764.8,433.0 770.8,483.5 750.2,470.3" fill="#5c6776" fill-opacity="0.080"/>
<polygon points="786.9,378.9 808.9,389.3 811.0,414.9 789.3,403.9" fill="#4c5767" fill-opacity="0.250"/>
<polygon points="789.3,403.9 811.0,414.9 814.9,464.0 793.9,451.9" fill="#5c6776" fill-opacity="0.080"/>
<polygon points="835.3,362.2 857.8,371.6 858.8,396.2 836.7,386.3" fill="#4c5767" fill-opacity="0.250"/>
<polygon points="836.7,386.3 858.8,396.2 860.8,443.6 839.5,432.7" fill="#5c6776" fill-opacity="0.080"/>
<polygon points="863.3,352.6 885.9,361.3 886.4,385.5 864.2,376.1" fill="#4c5767" fill-opacity="0.250"/>
<polygon points="864.2,376.1 886.4,385.5 887.4,431.8 865.8,421.5" fill="#5c6776" fill-opacity="0.080"/>
<polygon points="854.8,320.1 1033.3,382.0 1026.4,456.4 857.5,383.4" fill="#5c6776" fill-opacity="0.140"/>
<polygon points="864.5,317.2 1042.9,377.5 1035.6,451.2 866.7,380.0" fill="#5c6776" fill-opacity="0.140"/>
<polygon points="883.1,323.5 904.1,316.7 904.3,338.1 883.5,345.3" fill="#4c5767" fill-opacity="0.220"/>
<polygon points="883.5,345.3 904.3,338.1 904.5,379.6 884.5,387.5" fill="#5c6776" fill-opacity="0.100"/>
<polygon points="899.7,329.1 920.9,322.1 920.7,343.8 900.0,351.3" fill="#4c5767" fill-opacity="0.220"/>
<polygon points="900.0,351.3 920.7,343.8 920.5,386.0 900.4,394.2" fill="#5c6776" fill-opacity="0.100"/>
<polygon points="920.1,336.0 941.3,328.6 940.8,350.8 920.0,358.6" fill="#4c5767" fill-opacity="0.220"/>
<polygon points="920.0,358.6 940.8,350.8 939.9,393.8 919.8,402.4" fill="#5c6776" fill-opacity="0.100"/>
<polygon points="941.7,343.3 962.8,335.5 962.0,358.2 941.2,366.4" fill="#4c5767" fill-opacity="0.220"/>
<polygon points="941.2,366.4 962.0,358.2 960.4,402.0 940.2,411.0" fill="#5c6776" fill-opacity="0.100"/>
<polygon points="961.0,349.8 982.2,341.7 981.0,364.8 960.2,373.4" fill="#4c5767" fill-opacity="0.220"/>
<polygon points="960.2,373.4 981.0,364.8 978.7,409.3 958.6,418.7" fill="#5c6776" fill-opacity="0.100"/>
<polygon points="981.4,356.7 1002.5,348.2 1000.9,371.7 980.1,380.7" fill="#4c5767" fill-opacity="0.220"/>
<polygon points="980.1,380.7 1000.9,371.7 997.9,417.0 977.8,426.8" fill="#5c6776" fill-opacity="0.100"/>
<polygon points="1002.7,363.9 1023.8,355.1 1021.8,379.0 1001.1,388.4" fill="#4c5767" fill-opacity="0.220"/>
<polygon points="1001.1,388.4 1021.8,379.0 1017.9,425.1 997.9,435.3" fill="#5c6776" fill-opacity="0.100"/>
<polygon points="1025.1,371.5 1046.1,362.2 1043.6,386.6 1023.0,396.4" fill="#4c5767" fill-opacity="0.220"/>
<polygon points="1023.0,396.4 1043.6,386.6 1038.9,433.5 1019.0,444.2" fill="#5c6776" fill-opacity="0.100"/>
<polygon points="923.3,357.0 941.5,350.2 940.0,419.0 922.7,426.9" fill="#4c5767" fill-opacity="0.160"/>
<polygon points="943.1,364.2 961.3,357.1 958.8,427.2 941.5,435.4" fill="#4c5767" fill-opacity="0.160"/>
<polygon points="964.0,371.8 982.2,364.3 978.4,435.6 961.2,444.3" fill="#4c5767" fill-opacity="0.160"/>
<polygon points="985.9,379.7 1004.1,371.9 999.0,444.5 981.8,453.6" fill="#4c5767" fill-opacity="0.160"/>
<polygon points="1001.2,385.3 1019.3,377.2 1013.3,450.7 996.1,460.0" fill="#4c5767" fill-opacity="0.160"/>
<polygon points="935.1,348.0 1023.2,378.5 1017.6,445.3 934.0,409.9" fill="#4c5767" fill-opacity="0.220"/>
<polygon points="932.6,360.7 1002.4,386.1 998.8,437.9 931.9,409.5" fill="#4c5767" fill-opacity="0.200"/>
<polygon points="598.5,412.2 672.4,388.7 677.1,414.1 605.0,438.8" fill="#4c5767" fill-opacity="0.140"/>
<polygon points="612.2,422.2 687.2,397.4 691.8,423.3 618.6,449.3" fill="#4c5767" fill-opacity="0.140"/>
<polygon points="629.3,434.7 705.6,408.2 709.9,434.7 635.5,462.4" fill="#4c5767" fill-opacity="0.140"/>
<polygon points="647.6,448.0 725.2,419.8 729.3,446.9 653.6,476.5" fill="#4c5767" fill-opacity="0.140"/>
<polygon points="667.2,462.4 746.2,432.1 749.9,459.9 673.1,491.5" fill="#4c5767" fill-opacity="0.140"/>
<polygon points="688.5,477.8 768.8,445.3 772.1,473.8 694.0,507.7" fill="#4c5767" fill-opacity="0.140"/>
<polygon points="711.4,494.6 793.0,459.6 795.8,488.8 716.6,525.2" fill="#4c5767" fill-opacity="0.140"/>
<polygon points="617.2,393.0 757.9,486.3 769.2,573.7 634.2,467.5" fill="#5c6776" fill-opacity="0.120"/>
<polygon points="634.3,387.8 777.2,477.8 786.9,564.3 650.1,461.5" fill="#5c6776" fill-opacity="0.100"/>
<polygon points="621.2,424.3 651.9,446.4 907.2,353.6 871.4,340.5" fill="#4c5767" fill-opacity="0.200"/>
<polygon points="627.5,451.5 657.9,474.8 858.8,396.2 824.1,380.6" fill="#4c5767" fill-opacity="0.140"/>
<polygon points="593.8,404.6 726.5,500.1 807.9,464.3 666.5,382.0" fill="#4c5767" fill-opacity="0.160"/>
<polygon points="925.7,349.1 1020.9,382.7 1046.6,420.0 955.5,385.1" fill="#4c5767" fill-opacity="0.220"/>
<polygon points="692.9,415.2 709.6,425.4 761.7,406.5 768.6,465.2 703.2,474.6" fill="#4c5767" fill-opacity="0.300"/>
<polygon points="934.5,350.4 1019.5,380.2 1033.5,426.8 952.4,394.7" fill="#4c5767" fill-opacity="0.240"/>
<polygon points="934.8,363.6 995.0,385.6 992.4,427.2 934.2,403.0" fill="#4c5767" fill-opacity="0.180"/>
<polygon points="809.5,503.8 846.6,487.5 1063.0,612.7 1032.4,637.3" fill="#999da2"/>
<polygon points="760.4,488.2 772.7,481.5 809.5,503.8 1032.4,637.3 1008.2,656.8" fill="#878c93"/>
<polygon points="741.0,499.4 760.4,488.2 1008.2,656.8 985.9,674.8" fill="#777d87"/>
<polygon points="654.2,457.7 670.0,451.8 741.0,499.4 985.9,674.8 967.8,689.3" fill="#656d79"/>
<polygon points="581.4,404.0 654.2,457.7 670.0,451.8 596.0,399.5" fill="url(#gD)"/>
<polygon points="729.0,418.4 765.2,405.2 774.1,482.1 740.4,497.0" fill="#6c7683" fill-opacity="0.550"/>
<polygon points="765.2,405.2 803.0,425.2 810.0,505.0 774.1,482.1" fill="#747e8b" fill-opacity="0.550"/>
<polygon points="803.0,425.2 842.2,409.6 846.5,487.4 810.0,505.0" fill="#6a7481" fill-opacity="0.600"/>
<polygon points="765.2,405.2 803.0,425.2 842.2,409.6 803.8,391.2" fill="#5c6776" fill-opacity="0.180"/>
<polyline points="736.8,471.8 771.2,457.4 807.8,479.4 845.1,462.4" fill="none" stroke="#4e596b" stroke-width="1.1" stroke-opacity="0.45"/>
<polyline points="736.4,469.5 771.0,455.1 807.5,477.1 845.0,460.1" fill="none" stroke="#a6aeb9" stroke-width="0.9" stroke-opacity="0.20"/>
<polygon points="771.2,457.4 807.8,479.4 845.1,462.4 808.0,442.0" fill="#5c6776" fill-opacity="0.150"/>
<polyline points="732.9,445.5 768.3,431.6 805.4,452.7 843.7,436.3" fill="none" stroke="#4e596b" stroke-width="1.1" stroke-opacity="0.45"/>
<polyline points="732.6,443.0 768.0,429.3 805.2,450.2 843.6,433.9" fill="none" stroke="#a6aeb9" stroke-width="0.9" stroke-opacity="0.20"/>
<polygon points="768.3,431.6 805.4,452.7 843.7,436.3 805.9,416.9" fill="#5c6776" fill-opacity="0.150"/>
<polygon points="793.7,472.4 806.3,480.0 808.3,502.5 795.9,494.7" fill="#566070" fill-opacity="0.600"/>
<polygon points="811.3,479.4 827.9,471.8 829.5,494.1 813.2,501.9" fill="#566070" fill-opacity="0.550"/>
<polygon points="773.0,436.5 789.7,446.0 791.8,467.6 775.3,457.7" fill="#5d6777" fill-opacity="0.500"/>
<polyline points="803.0,425.2 810.0,505.0" fill="none" stroke="#a9b1bc" stroke-width="1.2" stroke-opacity="0.30"/>
<polyline points="842.2,409.6 846.5,487.4" fill="none" stroke="#a9b1bc" stroke-width="1.0" stroke-opacity="0.30"/>
<polyline points="765.2,405.2 803.0,425.2 842.2,409.6" fill="none" stroke="#4e596b" stroke-width="1.4" stroke-opacity="0.40"/>
<polygon points="803.0,425.2 842.2,409.6 842.8,419.4 803.9,435.3" fill="#4c5767" fill-opacity="0.350"/>
<polygon points="581.4,404.0 967.8,689.3 963.9,761.0 594.7,455.6" fill="url(#gF)"/>
<line x1="587.6" y1="408.6" x2="600.9" y2="460.6" stroke="#97a1ae" stroke-width="0.8" stroke-opacity="0.03"/>
<line x1="594.1" y1="413.3" x2="607.2" y2="465.9" stroke="#97a1ae" stroke-width="0.8" stroke-opacity="0.03"/>
<line x1="600.6" y1="418.2" x2="613.7" y2="471.3" stroke="#97a1ae" stroke-width="0.8" stroke-opacity="0.03"/>
<line x1="607.4" y1="423.2" x2="620.3" y2="476.8" stroke="#97a1ae" stroke-width="0.8" stroke-opacity="0.03"/>
<line x1="614.4" y1="428.4" x2="627.2" y2="482.4" stroke="#97a1ae" stroke-width="0.8" stroke-opacity="0.03"/>
<line x1="621.6" y1="433.7" x2="634.2" y2="488.3" stroke="#97a1ae" stroke-width="0.8" stroke-opacity="0.03"/>
<line x1="629.0" y1="439.1" x2="641.5" y2="494.3" stroke="#97a1ae" stroke-width="0.8" stroke-opacity="0.03"/>
<line x1="636.6" y1="444.8" x2="649.0" y2="500.4" stroke="#97a1ae" stroke-width="0.8" stroke-opacity="0.03"/>
<line x1="644.4" y1="450.6" x2="656.6" y2="506.8" stroke="#97a1ae" stroke-width="0.8" stroke-opacity="0.03"/>
<line x1="652.5" y1="456.5" x2="664.5" y2="513.3" stroke="#97a1ae" stroke-width="0.8" stroke-opacity="0.03"/>
<line x1="660.9" y1="462.7" x2="672.7" y2="520.1" stroke="#97a1ae" stroke-width="0.8" stroke-opacity="0.12"/>
<line x1="669.5" y1="469.1" x2="681.1" y2="527.0" stroke="#97a1ae" stroke-width="0.8" stroke-opacity="0.13"/>
<line x1="678.4" y1="475.6" x2="689.7" y2="534.2" stroke="#97a1ae" stroke-width="0.8" stroke-opacity="0.14"/>
<line x1="687.6" y1="482.4" x2="698.7" y2="541.6" stroke="#97a1ae" stroke-width="0.8" stroke-opacity="0.14"/>
<line x1="697.1" y1="489.5" x2="707.9" y2="549.2" stroke="#97a1ae" stroke-width="0.8" stroke-opacity="0.15"/>
<line x1="707.0" y1="496.7" x2="717.4" y2="557.0" stroke="#97a1ae" stroke-width="0.8" stroke-opacity="0.15"/>
<line x1="717.2" y1="504.2" x2="727.2" y2="565.2" stroke="#97a1ae" stroke-width="0.8" stroke-opacity="0.16"/>
<line x1="727.7" y1="512.0" x2="737.4" y2="573.6" stroke="#97a1ae" stroke-width="0.8" stroke-opacity="0.17"/>
<line x1="738.6" y1="520.1" x2="747.9" y2="582.3" stroke="#97a1ae" stroke-width="0.8" stroke-opacity="0.17"/>
<line x1="750.0" y1="528.5" x2="758.8" y2="591.3" stroke="#97a1ae" stroke-width="0.8" stroke-opacity="0.18"/>
<line x1="761.7" y1="537.1" x2="770.0" y2="600.6" stroke="#97a1ae" stroke-width="0.8" stroke-opacity="0.18"/>
<line x1="773.9" y1="546.2" x2="781.7" y2="610.3" stroke="#97a1ae" stroke-width="0.8" stroke-opacity="0.19"/>
<line x1="786.6" y1="555.5" x2="793.8" y2="620.3" stroke="#97a1ae" stroke-width="0.8" stroke-opacity="0.20"/>
<line x1="799.8" y1="565.3" x2="806.4" y2="630.7" stroke="#97a1ae" stroke-width="0.8" stroke-opacity="0.20"/>
<line x1="813.5" y1="575.4" x2="819.4" y2="641.5" stroke="#97a1ae" stroke-width="0.8" stroke-opacity="0.21"/>
<line x1="827.8" y1="586.0" x2="833.0" y2="652.7" stroke="#97a1ae" stroke-width="0.8" stroke-opacity="0.21"/>
<line x1="842.7" y1="597.0" x2="847.1" y2="664.3" stroke="#97a1ae" stroke-width="0.8" stroke-opacity="0.22"/>
<line x1="858.3" y1="608.4" x2="861.7" y2="676.4" stroke="#97a1ae" stroke-width="0.8" stroke-opacity="0.22"/>
<line x1="874.5" y1="620.4" x2="877.0" y2="689.1" stroke="#97a1ae" stroke-width="0.8" stroke-opacity="0.23"/>
<line x1="891.5" y1="633.0" x2="892.9" y2="702.2" stroke="#97a1ae" stroke-width="0.8" stroke-opacity="0.24"/>
<line x1="909.3" y1="646.1" x2="909.5" y2="716.0" stroke="#97a1ae" stroke-width="0.8" stroke-opacity="0.24"/>
<line x1="927.9" y1="659.8" x2="926.8" y2="730.3" stroke="#97a1ae" stroke-width="0.8" stroke-opacity="0.25"/>
<line x1="947.4" y1="674.2" x2="945.0" y2="745.3" stroke="#97a1ae" stroke-width="0.8" stroke-opacity="0.25"/>
<line x1="588.1" y1="430.1" x2="965.8" y2="726.2" stroke="#98a3b0" stroke-width="1.2" stroke-opacity="0.28"/>
<line x1="588.7" y1="432.4" x2="965.6" y2="729.4" stroke="#556074" stroke-width="1.0" stroke-opacity="0.50"/>
<polygon points="594.5,456.0 940.1,737.5 970.9,761.2 966.9,793.5 601.0,480.0" fill="#ad5100"/>
<polyline points="594.5,455.4 940.1,736.9" fill="none" stroke="#b8651c" stroke-width="1.2" stroke-opacity="0.55"/>
<polygon points="598.7,462.8 624.0,481.1 627.0,499.5 602.5,480.4" fill="#747d89"/>
<polygon points="681.7,529.6 940.1,741.4 940.1,765.5 685.0,549.6" fill="#747d89"/>
<line x1="689.9" y1="537.2" x2="693.6" y2="556.2" stroke="#8f98a5" stroke-width="0.8" stroke-opacity="0.28"/>
<line x1="698.3" y1="544.0" x2="701.9" y2="563.2" stroke="#8f98a5" stroke-width="0.8" stroke-opacity="0.28"/>
<line x1="706.9" y1="551.1" x2="710.4" y2="570.4" stroke="#8f98a5" stroke-width="0.8" stroke-opacity="0.28"/>
<line x1="715.7" y1="558.4" x2="719.1" y2="577.9" stroke="#8f98a5" stroke-width="0.8" stroke-opacity="0.28"/>
<line x1="724.9" y1="565.9" x2="728.2" y2="585.6" stroke="#8f98a5" stroke-width="0.8" stroke-opacity="0.28"/>
<line x1="734.3" y1="573.7" x2="737.5" y2="593.5" stroke="#8f98a5" stroke-width="0.8" stroke-opacity="0.28"/>
<line x1="744.1" y1="581.7" x2="747.2" y2="601.7" stroke="#8f98a5" stroke-width="0.8" stroke-opacity="0.28"/>
<line x1="754.2" y1="589.9" x2="757.1" y2="610.2" stroke="#8f98a5" stroke-width="0.8" stroke-opacity="0.28"/>
<line x1="764.6" y1="598.5" x2="767.3" y2="618.9" stroke="#8f98a5" stroke-width="0.8" stroke-opacity="0.28"/>
<line x1="775.3" y1="607.3" x2="777.9" y2="627.9" stroke="#8f98a5" stroke-width="0.8" stroke-opacity="0.28"/>
<line x1="786.5" y1="616.4" x2="788.9" y2="637.2" stroke="#8f98a5" stroke-width="0.8" stroke-opacity="0.28"/>
<line x1="798.0" y1="625.9" x2="800.2" y2="646.8" stroke="#8f98a5" stroke-width="0.8" stroke-opacity="0.28"/>
<line x1="809.9" y1="635.7" x2="812.0" y2="656.8" stroke="#8f98a5" stroke-width="0.8" stroke-opacity="0.28"/>
<line x1="822.3" y1="645.8" x2="824.1" y2="667.2" stroke="#8f98a5" stroke-width="0.8" stroke-opacity="0.28"/>
<line x1="835.1" y1="656.3" x2="836.7" y2="677.9" stroke="#8f98a5" stroke-width="0.8" stroke-opacity="0.28"/>
<line x1="848.4" y1="667.3" x2="849.8" y2="689.0" stroke="#8f98a5" stroke-width="0.8" stroke-opacity="0.28"/>
<line x1="862.2" y1="678.6" x2="863.3" y2="700.5" stroke="#8f98a5" stroke-width="0.8" stroke-opacity="0.28"/>
<line x1="876.6" y1="690.4" x2="877.4" y2="712.4" stroke="#8f98a5" stroke-width="0.8" stroke-opacity="0.28"/>
<line x1="891.5" y1="702.6" x2="892.0" y2="724.9" stroke="#8f98a5" stroke-width="0.8" stroke-opacity="0.28"/>
<line x1="907.1" y1="715.4" x2="907.2" y2="737.8" stroke="#8f98a5" stroke-width="0.8" stroke-opacity="0.28"/>
<line x1="923.3" y1="728.7" x2="923.0" y2="751.2" stroke="#8f98a5" stroke-width="0.8" stroke-opacity="0.28"/>
<polygon points="967.8,689.3 1063.0,612.7 1049.1,712.7 962.1,793.3" fill="#727b88" fill-opacity="0.720"/>
<polygon points="968.7,756.8 1049.6,684.7 1048.3,694.3 968.1,766.6" fill="#5a6575" fill-opacity="0.220"/>
<polyline points="963.9,761.0 1053.4,681.3" fill="none" stroke="#a4acb7" stroke-width="1.8" stroke-opacity="0.60"/>
<polygon points="970.7,722.1 1054.2,651.2 1052.8,661.4 970.1,732.7" fill="#5a6575" fill-opacity="0.220"/>
<polyline points="965.8,726.2 1058.1,647.9" fill="none" stroke="#a4acb7" stroke-width="1.8" stroke-opacity="0.60"/>
<polyline points="967.8,689.3 963.9,761.0" fill="none" stroke="#a9b1bc" stroke-width="2.4" stroke-opacity="0.70"/>
<polyline points="1037.2,633.5 1025.3,734.8" fill="none" stroke="#a0a9b5" stroke-width="1.8" stroke-opacity="0.50"/>
<polyline points="1044.4,627.7 1031.9,728.6" fill="none" stroke="#59657a" stroke-width="1.0" stroke-opacity="0.45"/>
<polyline points="1063.0,612.7 1049.1,712.7" fill="none" stroke="#a0a9b5" stroke-width="1.2" stroke-opacity="0.50"/>
<polyline points="967.8,689.3 1063.0,612.7" fill="none" stroke="#a7afb9" stroke-width="1.2" stroke-opacity="0.60"/>
<polygon points="965.4,757.2 970.9,761.2 966.9,793.5 963.2,790.6" fill="#d9690c"/>
<polygon points="1015.2,390.4 1064.9,367.4 1056.6,439.5 1009.3,466.0" fill="#7d8693" fill-opacity="0.480"/>
<polygon points="910.6,352.4 1015.2,390.4 1009.3,466.0 910.7,421.5" fill="#7f8895" fill-opacity="0.300"/>
<polygon points="803.8,391.2 910.6,352.4 910.7,421.5 810.1,466.1" fill="#858e9b" fill-opacity="0.300"/>
<polyline points="1011.2,441.6 1059.3,416.2" fill="none" stroke="#a6aeb9" stroke-width="1.1" stroke-opacity="0.35"/>
<polyline points="1011.0,444.2 1059.0,418.7" fill="none" stroke="#4e596b" stroke-width="1.0" stroke-opacity="0.40"/>
<polyline points="910.7,399.1 1011.2,441.6" fill="none" stroke="#4e596b" stroke-width="1.1" stroke-opacity="0.45"/>
<polyline points="910.7,397.1 1011.4,439.4" fill="none" stroke="#a6aeb9" stroke-width="0.9" stroke-opacity="0.22"/>
<polyline points="808.0,442.0 910.7,399.1" fill="none" stroke="#4e596b" stroke-width="1.1" stroke-opacity="0.45"/>
<polyline points="807.9,439.8 910.7,397.1" fill="none" stroke="#a6aeb9" stroke-width="0.9" stroke-opacity="0.22"/>
<polyline points="1013.2,416.3 1062.1,392.1" fill="none" stroke="#a6aeb9" stroke-width="1.1" stroke-opacity="0.35"/>
<polyline points="1013.0,419.0 1061.8,394.6" fill="none" stroke="#4e596b" stroke-width="1.0" stroke-opacity="0.40"/>
<polyline points="910.6,376.0 1013.2,416.3" fill="none" stroke="#4e596b" stroke-width="1.1" stroke-opacity="0.45"/>
<polyline points="910.6,373.9 1013.4,414.0" fill="none" stroke="#a6aeb9" stroke-width="0.9" stroke-opacity="0.22"/>
<polyline points="805.9,416.9 910.6,376.0" fill="none" stroke="#4e596b" stroke-width="1.1" stroke-opacity="0.45"/>
<polyline points="805.7,414.6 910.6,373.9" fill="none" stroke="#a6aeb9" stroke-width="0.9" stroke-opacity="0.22"/>
<line x1="917.2" y1="354.8" x2="917.0" y2="424.3" stroke="#98a2af" stroke-width="0.7" stroke-opacity="0.16"/>
<line x1="924.0" y1="357.2" x2="923.4" y2="427.2" stroke="#98a2af" stroke-width="0.7" stroke-opacity="0.16"/>
<line x1="930.9" y1="359.7" x2="929.9" y2="430.2" stroke="#98a2af" stroke-width="0.7" stroke-opacity="0.16"/>
<line x1="937.9" y1="362.3" x2="936.5" y2="433.1" stroke="#98a2af" stroke-width="0.7" stroke-opacity="0.16"/>
<line x1="945.0" y1="364.9" x2="943.3" y2="436.2" stroke="#98a2af" stroke-width="0.7" stroke-opacity="0.16"/>
<line x1="952.3" y1="367.5" x2="950.1" y2="439.3" stroke="#98a2af" stroke-width="0.7" stroke-opacity="0.16"/>
<line x1="959.6" y1="370.2" x2="957.1" y2="442.4" stroke="#98a2af" stroke-width="0.7" stroke-opacity="0.16"/>
<line x1="967.1" y1="372.9" x2="964.2" y2="445.6" stroke="#98a2af" stroke-width="0.7" stroke-opacity="0.16"/>
<line x1="974.8" y1="375.7" x2="971.4" y2="448.8" stroke="#98a2af" stroke-width="0.7" stroke-opacity="0.16"/>
<line x1="982.6" y1="378.5" x2="978.7" y2="452.2" stroke="#98a2af" stroke-width="0.7" stroke-opacity="0.16"/>
<line x1="990.5" y1="381.4" x2="986.1" y2="455.5" stroke="#98a2af" stroke-width="0.7" stroke-opacity="0.16"/>
<line x1="998.6" y1="384.3" x2="993.7" y2="458.9" stroke="#98a2af" stroke-width="0.7" stroke-opacity="0.16"/>
<line x1="1006.8" y1="387.3" x2="1001.4" y2="462.4" stroke="#98a2af" stroke-width="0.7" stroke-opacity="0.16"/>
<line x1="813.7" y1="387.6" x2="819.3" y2="462.0" stroke="#98a2af" stroke-width="0.7" stroke-opacity="0.16"/>
<line x1="823.4" y1="384.1" x2="828.4" y2="458.0" stroke="#98a2af" stroke-width="0.7" stroke-opacity="0.16"/>
<line x1="832.9" y1="380.6" x2="837.4" y2="454.0" stroke="#98a2af" stroke-width="0.7" stroke-opacity="0.16"/>
<line x1="842.2" y1="377.2" x2="846.1" y2="450.1" stroke="#98a2af" stroke-width="0.7" stroke-opacity="0.16"/>
<line x1="851.3" y1="373.9" x2="854.7" y2="446.3" stroke="#98a2af" stroke-width="0.7" stroke-opacity="0.16"/>
<line x1="860.3" y1="370.7" x2="863.1" y2="442.6" stroke="#98a2af" stroke-width="0.7" stroke-opacity="0.16"/>
<line x1="869.1" y1="367.5" x2="871.4" y2="438.9" stroke="#98a2af" stroke-width="0.7" stroke-opacity="0.16"/>
<line x1="877.7" y1="364.3" x2="879.6" y2="435.3" stroke="#98a2af" stroke-width="0.7" stroke-opacity="0.16"/>
<line x1="886.1" y1="361.3" x2="887.6" y2="431.7" stroke="#98a2af" stroke-width="0.7" stroke-opacity="0.16"/>
<line x1="894.4" y1="358.2" x2="895.4" y2="428.3" stroke="#98a2af" stroke-width="0.7" stroke-opacity="0.16"/>
<line x1="902.6" y1="355.3" x2="903.1" y2="424.8" stroke="#98a2af" stroke-width="0.7" stroke-opacity="0.16"/>
<polyline points="581.4,404.0 886.6,310.4 1064.9,367.4" fill="none" stroke="#a0a8b2" stroke-width="2.0" stroke-opacity="0.70"/>
<polyline points="1064.9,367.4 1056.6,439.5" fill="none" stroke="#a3abb6" stroke-width="1.2" stroke-opacity="0.40"/>
<polyline points="1015.2,390.4 1009.3,466.0" fill="none" stroke="#aab3be" stroke-width="1.2" stroke-opacity="0.35"/>
<polyline points="1064.9,367.4 1015.2,390.4" fill="none" stroke="#a3abb6" stroke-width="1.2" stroke-opacity="0.45"/>
<polyline points="910.6,352.4 910.7,421.5" fill="none" stroke="#aab3be" stroke-width="1.2" stroke-opacity="0.30"/>
<polyline points="581.4,404.0 601.0,480.0" fill="none" stroke="#8a94a2" stroke-width="1.0" stroke-opacity="0.50"/>
<polyline points="594.7,455.6 887.4,352.0" fill="none" stroke="#5d697c" stroke-width="1.0" stroke-opacity="0.35"/>
<polyline points="887.4,352.0 1059.3,416.2" fill="none" stroke="#5d697c" stroke-width="1.0" stroke-opacity="0.30"/>
<polyline points="588.1,430.1 887.0,331.4" fill="none" stroke="#5d697c" stroke-width="1.0" stroke-opacity="0.35"/>
<polyline points="887.0,331.4 1062.1,392.1" fill="none" stroke="#5d697c" stroke-width="1.0" stroke-opacity="0.30"/>
<g><line x1="603.7" y1="809.5" x2="603.7" y2="773" stroke="#0000e6" stroke-width="2"/><polygon points="603.7,760.2 598.8,774.2 608.8,774.2" fill="#0000d8"/><line x1="603.7" y1="809.3" x2="633" y2="796" stroke="#00e000" stroke-width="2"/><polygon points="644.2,789.6 631.2,790.8 635.6,799.4" fill="#19e619"/><ellipse cx="633.6" cy="794.8" rx="2.6" ry="4.2" transform="rotate(-25 633.6 794.8)" fill="#0c9a0c"/><line x1="603.7" y1="809.3" x2="632" y2="823.6" stroke="#b40000" stroke-width="2"/><polygon points="644.2,829.6 630.4,828.8 635.6,819.6" fill="#a80000"/></g>
</svg></div>
<div id="sepline"></div>
<div id="bar"></div>
<div id="bar2"></div>
<div id="accept"><span class="bt" style="letter-spacing:0.030px">Accept</span></div>
<div id="cancel"><span class="bt" style="letter-spacing:0.060px">Cancel</span></div>
<div id="bl"></div><div id="br"></div><div id="bb"></div><div id="bb2"></div>
</div>
</body></html>
